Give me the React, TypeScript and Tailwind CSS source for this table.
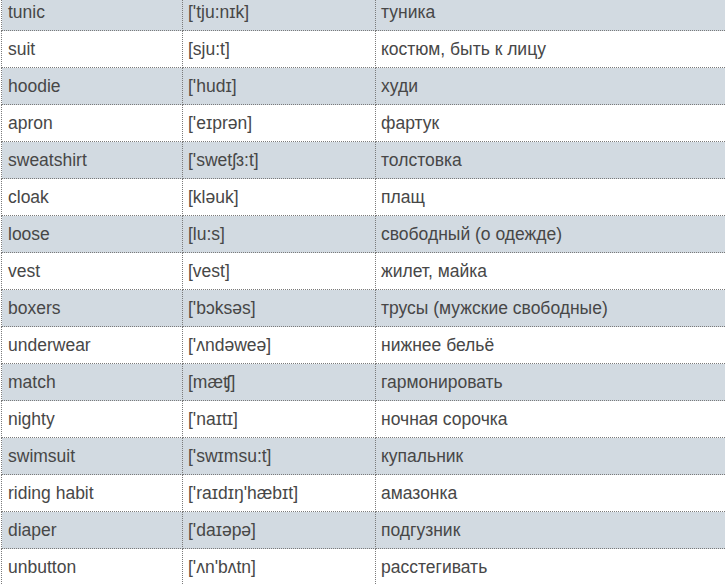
const rows: [string, string, string][] = [
  ["tunic", "['tju:nɪk]", "туника"],
  ["suit", "[sju:t]", "костюм, быть к лицу"],
  ["hoodie", "['hudɪ]", "худи"],
  ["apron", "['eɪprən]", "фартук"],
  ["sweatshirt", "['swetʃɜ:t]", "толстовка"],
  ["cloak", "[kləuk]", "плащ"],
  ["loose", "[lu:s]", "свободный (о одежде)"],
  ["vest", "[vest]", "жилет, майка"],
  ["boxers", "['bɔksəs]", "трусы (мужские свободные)"],
  ["underwear", "['ʌndəweə]", "нижнее бельё"],
  ["match", "[mæʧ]", "гармонировать"],
  ["nighty", "['naɪtɪ]", "ночная сорочка"],
  ["swimsuit", "['swɪmsu:t]", "купальник"],
  ["riding habit", "['raɪdɪŋ'hæbɪt]", "амазонка"],
  ["diaper", "['daɪəpə]", "подгузник"],
  ["unbutton", "['ʌn'bʌtn]", "расстегивать"],
];

export default function App() {
  return (
    <div className="w-[725px] h-[585px] overflow-hidden bg-white">
      <table
        className="-mt-[7px] ml-px w-[740px] border-collapse text-[17.5px] text-[#474747]"
        style={{ fontFamily: '"Liberation Sans", Arial, sans-serif' }}
      >
        <tbody>
          {rows.map((r, i) => (
            <tr key={r[0]} className={i % 2 === 0 ? "bg-[#d2dae1]" : "bg-white"}>
              <td className="w-[181px] h-[37px] border border-dotted border-[#7a7a7a] pl-[6px] pr-0 py-0 align-middle">
                {r[0]}
              </td>
              <td className="w-[193px] h-[37px] border border-dotted border-[#7a7a7a] pl-[5px] pr-0 py-0 align-middle">
                {r[1]}
              </td>
              <td className="h-[37px] border border-dotted border-[#7a7a7a] pl-[5px] pr-0 py-0 align-middle">
                {r[2]}
              </td>
            </tr>
          ))}
        </tbody>
      </table>
    </div>
  );
}
